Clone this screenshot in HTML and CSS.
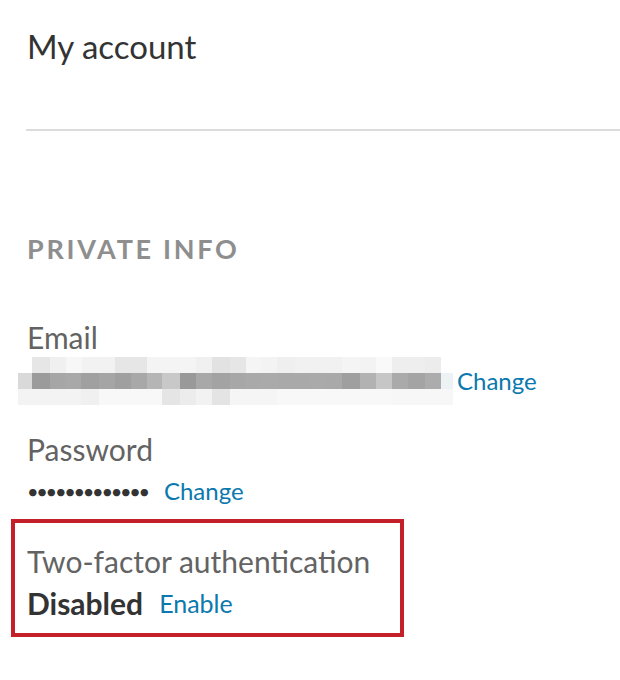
FILE: index.html
```html
<!DOCTYPE html>
<html>
<head>
    <title>My account</title>
    <link rel="stylesheet" href="styles.css">
</head>
<body>
    <div class="page">
        <h1 class="title">My account</h1>
        <hr class="divider">

        <h2 class="section-title">PRIVATE INFO</h2>

        <!-- Email -->
        <div class="field">
            <div class="label">Email</div>
            <div class="value">
                <div class="blurred">
                    <div class="blur-row row-top"></div>
                    <div class="blur-row row-mid"></div>
                    <div class="blur-row row-bot"></div>
                </div>
                <a class="link" href="#">Change</a>
            </div>
        </div>

        <!-- Password -->
        <div class="field field-tight">
            <div class="label">Password</div>
            <div class="value">
                <span class="dots">&bull;&bull;&bull;&bull;&bull;&bull;&bull;&bull;&bull;&bull;&bull;&bull;&bull;</span>
                <a class="link" href="#">Change</a>
            </div>
        </div>

        <!-- Two-factor -->
        <div class="field highlight">
            <div class="label">Two-factor authentication</div>
            <div class="value">
                <span class="status">Disabled</span>
                <a class="link link-small" href="#">Enable</a>
            </div>
        </div>
    </div>
</body>
</html>
```

FILE: styles.css
```css
body {
    margin: 0;
    background: #fff;
    font-family: Lato, "Open Sans", sans-serif;
    color: #333;
}

.page {
    padding: 22px 0 0 27px;
}

.title {
    margin: 0;
    font-size: 33px;
    font-weight: 400;
    color: #333;
    line-height: 48px;
}

.divider {
    margin: 59px 0 0 -1px;
    border: 0;
    height: 2px;
    background: #dcdcdc;
}

.section-title {
    margin: 100px 0 0;
    font-size: 27px;
    font-weight: 700;
    letter-spacing: 2.7px;
    color: #8e8e8e;
    line-height: 36px;
}

.field {
    margin-top: 50px;
}

.field-tight {
    margin-top: 24px;
}

.label {
    font-size: 30px;
    color: #636363;
    line-height: 40px;
}

.value {
    display: flex;
    align-items: center;
    gap: 16px;
    line-height: 44px;
}

.link {
    font-size: 24px;
    color: #0b79ad;
    text-decoration: none;
}

.link-small {
    font-size: 25px;
}

/* pixelated email */
.blurred {
    margin: 0 -12px 0 -9px;
    width: 435px;
}

.blur-row {
    height: 16px;
}

.row-top {
    margin-left: 14px;
    width: 409px;
    background: linear-gradient(to right,
        #e6e6e6 0 18px, #f0f0f0 18px 34px, #f7f7f7 34px 50px, #f2f2f2 50px 83px,
        #e6e6e6 83px 115px, #f4f4f4 115px 164px, #f0f0f0 164px 180px, #e2e2e2 180px 198px,
        #e6e6e6 198px 214px, #f5f5f5 214px 229px, #f3f3f3 229px 245px, #efefef 245px 263px,
        #f1f1f1 263px 310px, #f4f4f4 310px 328px, #f3f3f3 328px 344px, #f9f9f9 344px 360px,
        #eeeeee 360px 393px, #ececec 393px 409px);
}

.row-mid {
    background: linear-gradient(to right,
        #d9d9d9 0 14px, #9b9b9b 14px 32px, #a6a6a6 32px 47px, #a8a8a8 47px 63px,
        #a0a0a0 63px 81px, #a5a5a5 81px 97px, #9f9f9f 97px 113px, #a8a8a8 113px 129px,
        #b5b5b5 129px 144px, #c8c8c8 144px 162px, #999999 162px 178px, #a8a8a8 178px 194px,
        #a3a3a3 194px 212px, #a7a7a7 212px 227px, #a9a9a9 227px 243px, #aaaaaa 243px 259px,
        #a9a9a9 259px 293px, #aaaaaa 293px 308px, #a9a9a9 308px 324px, #9f9f9f 324px 342px,
        #b2b2b2 342px 358px, #c6c6c6 358px 374px, #aaaaaa 374px 390px, #a4a4a4 390px 407px,
        #acacac 407px 423px, #edf2f5 423px 435px);
}

.row-bot {
    background: linear-gradient(to right,
        #f3f3f3 0 63px, #f0f0f0 63px 81px, #f8f8f8 81px 144px, #e5e5e5 144px 162px,
        #ececec 162px 178px, #f2f2f2 178px 194px, #e4e4e4 194px 212px, #f5f5f5 212px 259px,
        #f8f8f8 259px 374px, #f7f7f7 374px 435px);
}

.dots {
    font-size: 20px;
    letter-spacing: -2.3px;
    color: #333;
}

.highlight {
    margin: 6px 0 0 -16px;
    width: 393px;
    box-sizing: border-box;
    padding: 18px 0 8px 12px;
    border: 4px solid #c4202a;
}

.status {
    font-size: 30px;
    font-weight: 700;
    color: #333;
}
```
